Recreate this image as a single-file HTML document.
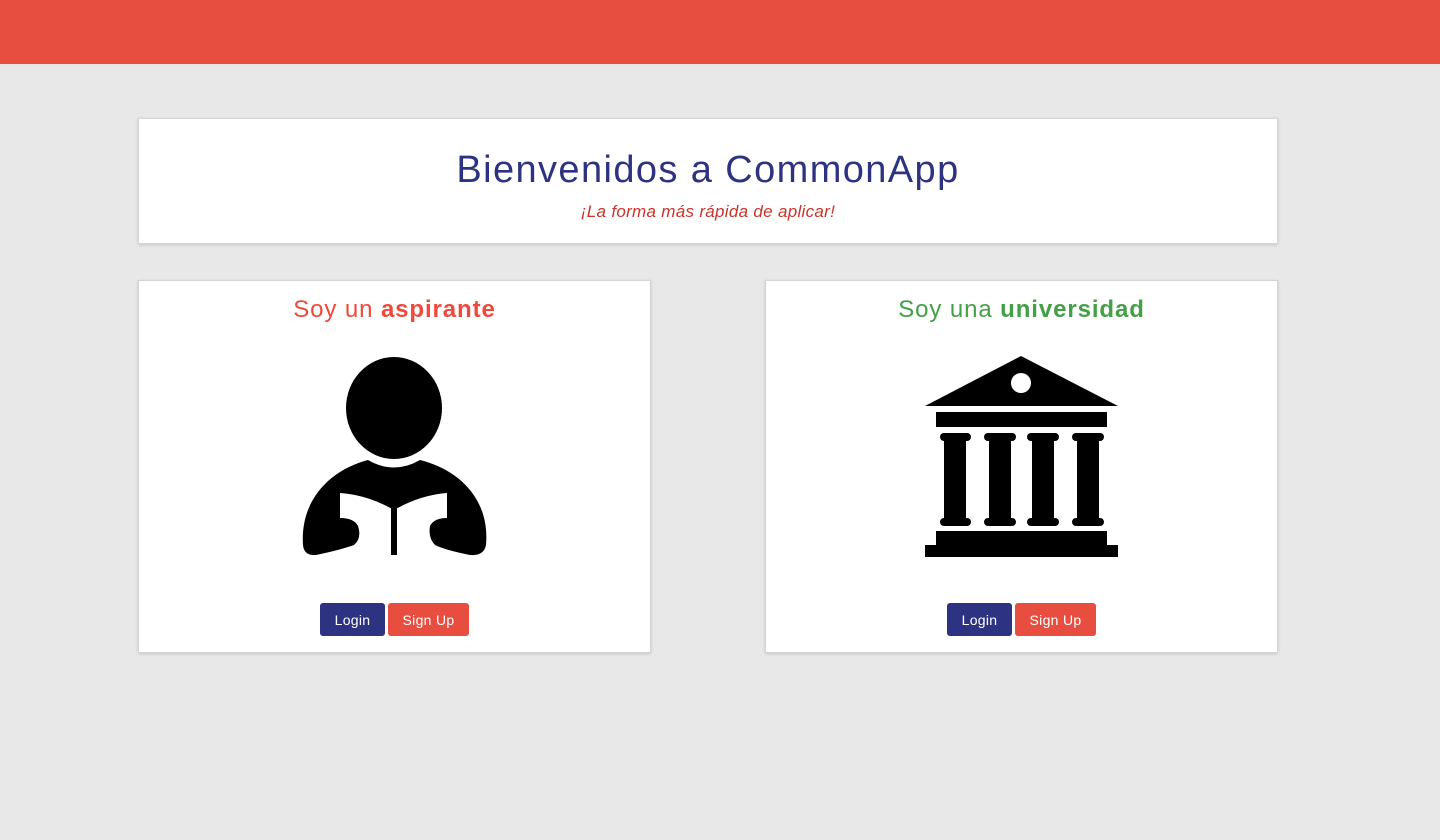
<!DOCTYPE html>
<html><head><meta charset="utf-8"><style>
*{margin:0;padding:0;box-sizing:border-box}
body{width:1440px;height:840px;background:#e8e8e8;font-family:"Liberation Sans",sans-serif;position:relative;overflow:hidden}
.top{position:absolute;left:0;top:0;width:1440px;height:64px;background:#e84e3f}
.card{position:absolute;background:#fff;border:1px solid #d4d4d4;box-shadow:0 1px 3px rgba(0,0,0,.15)}
.t{position:absolute;left:0;width:100%;text-align:center}
.btn{position:absolute;top:603px;height:33px;border-radius:3px;color:#fff;font-size:14px;line-height:34px;text-align:center;letter-spacing:0.3px}
</style></head><body>
<div class="top"></div>
<div class="card" style="left:138px;top:118px;width:1140px;height:126px">
  <div class="t" style="top:30px;font-size:38px;color:#2e3381;letter-spacing:1.4px">Bienvenidos a CommonApp</div>
  <div class="t" style="top:83px;font-size:17px;font-style:italic;color:#c9342a;letter-spacing:0.3px">¡La forma más rápida de aplicar!</div>
</div>
<div class="card" style="left:138px;top:280px;width:513px;height:373px">
  <div class="t" style="top:15px;font-size:24px;color:#f0493b;letter-spacing:0.9px">Soy un <b>aspirante</b></div>
</div>
<div class="card" style="left:765px;top:280px;width:513px;height:373px">
  <div class="t" style="top:15px;font-size:24px;color:#43a047;letter-spacing:0.9px">Soy una <b>universidad</b></div>
</div>
<svg style="position:absolute;left:0;top:0" width="1440" height="840">
  <ellipse cx="394" cy="408" rx="48" ry="51" fill="#000"/>
  <path d="M303 545 C300 500 330 470 368 460 Q394 475 420 460 C460 470 490 500 486 545 Q484 556 470 555 Q445 550 435 545 Q428 538 430 526 Q434 518 447 518 L447 493 Q420 495 394 510 Q368 495 340 493 L340 518 Q354 518 358 526 Q362 538 354 545 Q340 550 316 555 Q304 556 303 545 Z" fill="#000"/>
  <rect x="391" y="508" width="6" height="47" fill="#000"/>
  <polygon points="925,406 1021,356 1118,406" fill="#000"/>
  <circle cx="1021" cy="383" r="10" fill="#fff"/>
  <rect x="936" y="412" width="171" height="15" fill="#000"/>
  <g fill="#000">
    <rect x="940" y="433" width="31" height="8" rx="4"/><rect x="944" y="438" width="22" height="84"/><rect x="940" y="518" width="31" height="8" rx="4"/>
    <rect x="984" y="433" width="32" height="8" rx="4"/><rect x="989" y="438" width="22" height="84"/><rect x="984" y="518" width="32" height="8" rx="4"/>
    <rect x="1027" y="433" width="32" height="8" rx="4"/><rect x="1032" y="438" width="22" height="84"/><rect x="1027" y="518" width="32" height="8" rx="4"/>
    <rect x="1072" y="433" width="32" height="8" rx="4"/><rect x="1077" y="438" width="22" height="84"/><rect x="1072" y="518" width="32" height="8" rx="4"/>
  </g>
  <rect x="936" y="531" width="171" height="15" fill="#000"/>
  <rect x="925" y="545" width="193" height="12" fill="#000"/>
</svg>
<div class="btn" style="left:320px;width:65px;background:#2e3381">Login</div>
<div class="btn" style="left:388px;width:81px;background:#e84e3f">Sign Up</div>
<div class="btn" style="left:947px;width:65px;background:#2e3381">Login</div>
<div class="btn" style="left:1015px;width:81px;background:#e84e3f">Sign Up</div>
</body></html>
